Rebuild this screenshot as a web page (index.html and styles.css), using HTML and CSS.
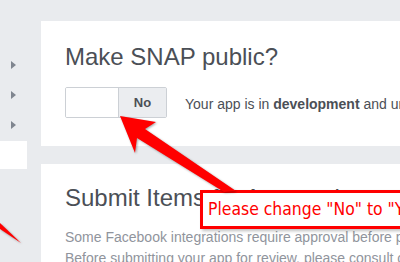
FILE: index.html
```html
<!DOCTYPE html>
<html lang="en">
<head>
  <meta charset="UTF-8">
  <title>App Review - SNAP</title>
  <link rel="stylesheet" href="styles.css">
</head>
<body>
  <div class="page">
    <!-- Sidebar -->
    <nav class="sidebar">
      <ul class="side-menu">
        <li><span class="caret"></span></li>
        <li><span class="caret"></span></li>
        <li><span class="caret"></span></li>
      </ul>
      <div class="side-box"></div>
    </nav>

    <!-- Main -->
    <main class="content">
      <section class="card card-public">
        <h2 class="card-title">Make SNAP public?</h2>
        <div class="public-row">
          <div class="toggle">
            <span class="toggle-off"></span>
            <span class="toggle-on">No</span>
          </div>
          <p class="status">Your app is in <strong>development</strong> and unavailable to the public.</p>
        </div>
      </section>

      <section class="card card-submit">
        <h2 class="card-title">Submit Items for Approval</h2>
        <p class="card-text">Some Facebook integrations require approval before public usage.<br>Before submitting your app for review, please consult our Platform Policy and Review Guidelines.</p>
      </section>
    </main>
  </div>

  <!-- Annotations -->
  <div class="callout">Please change "No" to "Yes"</div>
  <svg class="markup" width="400" height="262" viewBox="0 0 400 262">
    <polygon class="arrow" points="120,116 156,122 145,129 236,191 224,192 137,138 135,153"></polygon>
    <polygon class="arrow" points="0,223 21,243 0,229"></polygon>
  </svg>
</body>
</html>
```

FILE: styles.css
```css
body {
  font-family: "Liberation Sans", Arial, sans-serif;
  background: #e9ebee;
  margin: 0;
  padding: 0;
  overflow: hidden;
}

.page {
  display: flex;
  width: 400px;
  height: 262px;
  overflow: hidden;
}

/* Sidebar */
.sidebar {
  width: 41px;
  flex-shrink: 0;
  padding-top: 50px;
}

.side-menu {
  list-style: none;
  margin: 0;
  padding: 0;
}

.side-menu li {
  height: 30px;
  display: flex;
  align-items: center;
  padding-left: 11px;
}

.caret {
  width: 0;
  height: 0;
  border-left: 5px solid #7f858f;
  border-top: 4px solid transparent;
  border-bottom: 4px solid transparent;
}

.side-box {
  width: 27px;
  height: 28px;
  margin-top: 1px;
  background: white;
}

/* Cards */
.content {
  flex: 1;
  padding-top: 21px;
  min-width: 0;
}

.card {
  background: white;
  padding: 22px 24px 28px;
  margin-bottom: 18px;
  white-space: nowrap;
}

.card-submit {
  padding-top: 20px;
}

.card-title {
  font-size: 24px;
  line-height: 28px;
  font-weight: normal;
  color: #4b4f56;
  margin: 0;
}

.public-row {
  display: flex;
  align-items: flex-start;
  margin-top: 16px;
}

.toggle {
  display: flex;
  flex-shrink: 0;
  width: 102px;
  height: 31px;
  box-sizing: border-box;
  border: 1px solid #ccd0d5;
  border-radius: 2px;
  overflow: hidden;
}

.toggle-off {
  width: 52px;
  background: white;
}

.toggle-on {
  flex: 1;
  display: flex;
  align-items: center;
  justify-content: center;
  background: #ebedf0;
  border-left: 1px solid #ccd0d5;
  font-size: 13px;
  font-weight: bold;
  color: #4b4f56;
}

.status {
  margin: 8px 0 0 18px;
  font-size: 14px;
  line-height: 18px;
  color: #4b4f56;
}

.card-text {
  margin: 15px 0 0;
  font-size: 14px;
  line-height: 21px;
  color: #90949c;
}

/* Annotations */
.callout {
  position: absolute;
  left: 200px;
  top: 190px;
  right: -20px;
  height: 39px;
  box-sizing: border-box;
  border: 3px solid #ff0000;
  background: white;
  padding-left: 5px;
  font-family: "DejaVu Sans Condensed", "DejaVu Sans", sans-serif;
  font-size: 17.4px;
  line-height: 33px;
  color: #ff0000;
  white-space: nowrap;
  overflow: hidden;
  box-shadow: 2px 2px 3px rgba(0, 0, 0, 0.25);
}

.markup {
  position: absolute;
  left: 0;
  top: 0;
  pointer-events: none;
}

.arrow {
  fill: #ff0000;
  filter: drop-shadow(1px 1px 1px rgba(0, 0, 0, 0.35));
}
```
